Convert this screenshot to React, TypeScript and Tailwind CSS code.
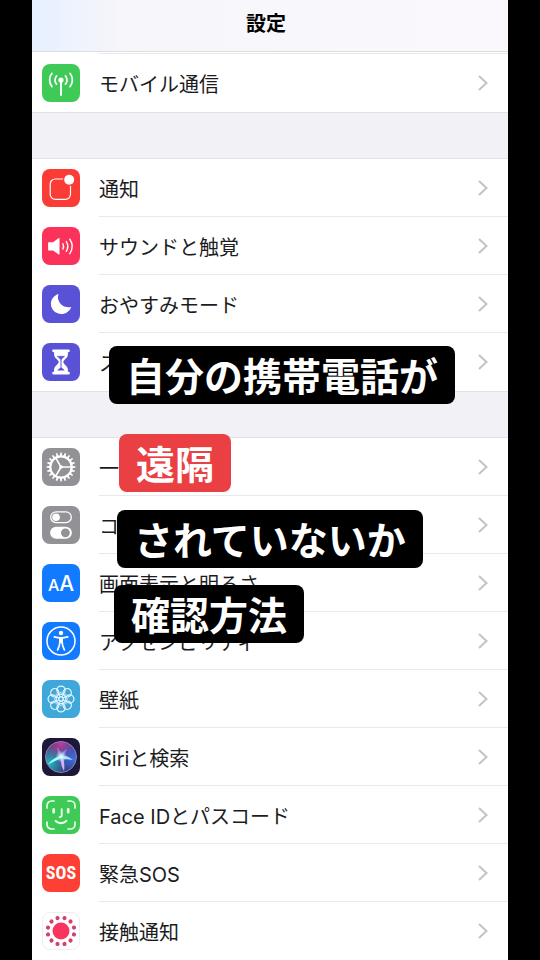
import React from 'react';

interface SettingItem {
  name: string;
  tile: string;
  icon: React.ReactNode;
}

interface IconProps {
  children: React.ReactNode;
}

const Icon: React.FC<IconProps> = ({ children }) => (
  <svg viewBox="0 0 38 38" className="w-full h-full" fill="none" stroke="white" strokeLinecap="round" strokeLinejoin="round" aria-hidden="true">
    {children}
  </svg>
);

const range = (count: number) => Array.from({ length: count }, (_, i) => i);

const AntennaIcon = () => (
  <Icon>
    <circle cx="19" cy="16" r="2.6" fill="white" stroke="none" />
    <path d="M19 16V31" strokeWidth="1.9" />
    <path d="M14.6 11.8a6.2 6.2 0 0 0 0 8.4M23.4 11.8a6.2 6.2 0 0 1 0 8.4" strokeWidth="1.7" />
    <path d="M10 9.3a10.6 10.6 0 0 0 0 13.4M28 9.3a10.6 10.6 0 0 1 0 13.4" strokeWidth="1.7" />
  </Icon>
);

const NotificationIcon = () => (
  <Icon>
    <rect x="8.2" y="10" width="20.3" height="20.3" rx="5" strokeWidth="1.2" />
    <circle cx="27.2" cy="10.8" r="6.3" fill="#fb3b36" stroke="none" />
    <circle cx="27.2" cy="10.8" r="5" fill="white" stroke="none" />
  </Icon>
);

const SoundIcon = () => (
  <Icon>
    <path d="M6.7 15.3h4.4l5.6-4.3a.5.5 0 0 1 .8.4v15.7a.5.5 0 0 1-.8.4l-5.6-4H6.7a.6.6 0 0 1-.6-.6v-7a.6.6 0 0 1 .6-.6z" fill="white" stroke="none" />
    <path d="M20.9 16.7a6 6 0 0 1 0 5.4" strokeWidth="1.4" />
    <path d="M24.3 14.5a9.500 9.500 0 0 1 0 9.800" strokeWidth="1.4" />
    <path d="M27.8 12.2a13 13 0 0 1 0 14.5" strokeWidth="1.4" />
  </Icon>
);

const MoonIcon = () => (
  <Icon>
    <path d="M16.6 8.9c-.8 2.100-.9 4.400 0 6.700 1.900 5 7.300 7.700 12.700 6.300-1.600 4.300-5.500 7-10 7-5.900 0-10.400-4.500-10.400-10.100 0-4.600 3.100-8.600 7.700-9.900z" fill="white" stroke="none" />
  </Icon>
);

const HourglassIcon = () => (
  <Icon>
    <path d="M11.5 6.5h15a1.200 1.200 0 0 1 0 2.700h-.6v2.200c0 3.600-4.600 5.400-4.600 7.600s4.600 4 4.600 7.600v2.200h.6a1.200 1.200 0 0 1 0 2.700h-15a1.200 1.200 0 0 1 0-2.700h.6v-2.200c0-3.600 4.600-5.400 4.600-7.600s-4.600-4-4.600-7.600V9.200h-.6a1.200 1.200 0 0 1 0-2.700z" fill="white" stroke="none" />
    <path d="M15.500 13.300h7L19 16.600z" fill="#5a52d6" stroke="#5a52d6" strokeWidth=".6" />
    <path d="M19 15v10" stroke="#5a52d6" strokeWidth="1" />
    <path d="M15.300 27.600c.6-1.500 2.300-2.300 3.700-3.200 1.400.9 3.100 1.700 3.700 3.200z" fill="#5a52d6" stroke="none" />
  </Icon>
);

const GearIcon = () => (
  <Icon>
    {range(20).map((i) => (
      <path key={i} d="M17.900 8L18.300 4.600H19.700L20.100 8z" fill="white" stroke="none" transform={`rotate(${i * 18} 19 19)`} />
    ))}
    <circle cx="19" cy="19" r="10.700" strokeWidth="2.200" />
    <circle cx="19" cy="19" r="1.800" fill="white" stroke="none" />
    {range(3).map((i) => (
      <path key={i} d="M19 19H29" strokeWidth="1.600" transform={`rotate(${i * 120} 19 19)`} />
    ))}
  </Icon>
);

const ControlIcon = () => (
  <Icon>
    <rect x="8.700" y="5.800" width="20.600" height="10.800" rx="5.400" strokeWidth="1.300" />
    <circle cx="14.100" cy="11.200" r="3.800" fill="white" stroke="none" />
    <rect x="8.100" y="20.800" width="21.800" height="12" rx="6" fill="white" stroke="none" />
    <circle cx="23.400" cy="26.800" r="4.400" fill="#919196" stroke="none" />
  </Icon>
);

const AccessibilityIcon = () => (
  <Icon>
    <circle cx="19" cy="19" r="14" strokeWidth="1.500" />
    <circle cx="19" cy="11" r="2.200" fill="white" stroke="none" />
    <path d="M12.300 14.900c2.300.6 4.500.9 6.700.9s4.400-.3 6.700-.9" strokeWidth="1.700" />
    <path d="M17 15.500h4v5.800h-4z" fill="white" stroke="none" />
    <path d="M17.800 20.500c0 2.800-1 5-2.200 7.400M20.200 20.500c0 2.800 1 5 2.200 7.400" strokeWidth="1.700" />
  </Icon>
);

const WallpaperIcon = () => (
  <Icon>
    {range(8).map((i) => (
      <g key={i} transform={`rotate(${i * 45} 19 19)`}>
        <circle cx="19" cy="10.200" r="4.100" stroke="#e4f7fd" strokeWidth="1.300" />
        <path d="M19 17c-2.200-1.600-2.200-3.400 0-5 2.200 1.600 2.200 3.400 0 5z" stroke="#e4f7fd" strokeWidth=".7" />
      </g>
    ))}
    <circle cx="19" cy="19" r="2.200" stroke="#e4f7fd" strokeWidth="1.100" />
  </Icon>
);

const SiriIcon = () => (
  <Icon>
    <defs>
      <radialGradient id="siriPink" cx=".5" cy=".08" r=".6">
        <stop offset="0" stopColor="#c03a98" />
        <stop offset="1" stopColor="#c03a98" stopOpacity="0" />
      </radialGradient>
      <radialGradient id="siriTeal" cx=".12" cy=".7" r=".6">
        <stop offset="0" stopColor="#22b9c4" />
        <stop offset="1" stopColor="#22b9c4" stopOpacity="0" />
      </radialGradient>
      <radialGradient id="siriBlue" cx=".9" cy=".55" r=".6">
        <stop offset="0" stopColor="#3a70de" />
        <stop offset="1" stopColor="#3a70de" stopOpacity="0" />
      </radialGradient>
      <radialGradient id="siriGlow">
        <stop offset="0" stopColor="#ffffff" />
        <stop offset=".4" stopColor="#bdf6ff" stopOpacity=".7" />
        <stop offset="1" stopColor="#9edcff" stopOpacity="0" />
      </radialGradient>
    </defs>
    <circle cx="19" cy="19" r="15.500" fill="#3b2b6d" stroke="none" />
    <circle cx="19" cy="19" r="15.500" fill="url(#siriPink)" stroke="none" />
    <circle cx="19" cy="19" r="15.500" fill="url(#siriTeal)" stroke="none" />
    <circle cx="19" cy="19" r="15.500" fill="url(#siriBlue)" stroke="none" />
    <path d="M19 17.500C14 19 9 22 6 26.500c5-2.500 9.500-4.500 14-6.500z" fill="#a5f8fb" stroke="none" />
    <path d="M18.500 18c0 6 1 10.500 3.500 15 .8-5 0-10-1-15z" fill="#d9b0f5" stroke="none" />
    <path d="M18 18c4-1 9 0 13 4-5-.8-9-1-13-1z" fill="#a9dcff" stroke="none" />
    <path d="M17.500 20c-1.500-5-2.500-8-2-11 2 3 3.500 6 4.500 9.500z" fill="#ff9fd3" fillOpacity=".45" stroke="none" />
    <path d="M18 19c1.500-4 4-6.500 7-8-1.200 3.500-3 6-5 9z" fill="#dfc5ff" fillOpacity=".4" stroke="none" />
    <circle cx="19.200" cy="18.500" r="6" fill="url(#siriGlow)" stroke="none" />
    <circle cx="19" cy="19" r="15.500" stroke="#8f8bb8" strokeWidth=".9" />
  </Icon>
);

const FaceIdIcon = () => (
  <Icon>
    <g stroke="#e9ffe9">
      <path d="M5 12V9.500A4.500 4.500 0 0 1 9.500 5H12M26 5h2.500A4.500 4.500 0 0 1 33 9.500V12M33 26v2.500a4.500 4.500 0 0 1-4.500 4.500H26M12 33H9.500A4.500 4.500 0 0 1 5 28.500V26" strokeWidth="1.700" />
      <path d="M11.700 13.400v2.800M26.200 13.400v2.800" strokeWidth="2.700" />
      <path d="M19.700 13.300v6.300c0 1-.6 1.500-2 1.500" strokeWidth="1.900" />
      <path d="M13.700 25c3 2.900 7.600 2.900 10.600 0" strokeWidth="2.200" />
    </g>
  </Icon>
);

const ContactIcon = () => (
  <Icon>
    <circle cx="19" cy="19" r="9" fill="#f8345f" stroke="none" />
    {range(12).map((i) => (
      <circle key={i} cx="19" cy="4.800" r="2.200" fill="#d33f70" stroke="none" transform={`rotate(${i * 30 + 15} 19 19)`} />
    ))}
  </Icon>
);

const groups: SettingItem[][] = [
  [{ name: 'モバイル通信', tile: 'bg-[#3fca58]', icon: <AntennaIcon /> }],
  [
    { name: '通知', tile: 'bg-[#fb3b36]', icon: <NotificationIcon /> },
    { name: 'サウンドと触覚', tile: 'bg-[#fb3259]', icon: <SoundIcon /> },
    { name: 'おやすみモード', tile: 'bg-[#5a52d6]', icon: <MoonIcon /> },
    { name: 'スクリーンタイム', tile: 'bg-[#5a52d6]', icon: <HourglassIcon /> },
  ],
  [
    { name: '一般', tile: 'bg-[#919196]', icon: <GearIcon /> },
    { name: 'コントロールセンター', tile: 'bg-[#919196]', icon: <ControlIcon /> },
    {
      name: '画面表示と明るさ',
      tile: 'bg-[#117aff]',
      icon: (
        <span className="flex items-baseline leading-none font-medium text-white">
          <span className="text-base leading-none">A</span>
          <span className="text-[21px] leading-none">A</span>
        </span>
      ),
    },
    { name: 'アクセシビリティ', tile: 'bg-[#117aff]', icon: <AccessibilityIcon /> },
    { name: '壁紙', tile: 'bg-[#3fa7d9]', icon: <WallpaperIcon /> },
    { name: 'Siriと検索', tile: 'bg-[#1d1838]', icon: <SiriIcon /> },
    { name: 'Face IDとパスコード', tile: 'bg-[#3fca58]', icon: <FaceIdIcon /> },
    {
      name: '緊急SOS',
      tile: 'bg-[#fe3f35]',
      icon: <span className="font-['Liberation_Sans_Narrow','Roboto_Condensed','Roboto',sans-serif] text-lg font-bold leading-none text-white">SOS</span>,
    },
    { name: '接触通知', tile: 'bg-white border border-[#f0eef0]', icon: <ContactIcon /> },
  ],
];

const captions = [
  { text: '自分の携帯電話が', style: 'bg-black' },
  { text: '遠隔', style: 'bg-[#ea4043] mt-[30px] ml-[10px]' },
  { text: 'されていないか', style: 'bg-black mt-[18px] ml-2' },
  { text: '確認方法', style: 'bg-black mt-[17px] ml-[5px]' },
];

const SettingRow: React.FC<{ item: SettingItem; isLast: boolean }> = ({ item, isLast }) => (
  <li>
    <a href="#" className="flex items-center h-[58px] pl-[10px]">
      <span className={`flex items-center justify-center w-[38px] h-[38px] shrink-0 rounded-lg overflow-hidden ${item.tile}`}>
        {item.icon}
      </span>
      <span className={`flex flex-1 items-center justify-between h-full ml-[19px] pr-5 ${isLast ? '' : 'border-b border-[#e9e9eb]'}`}>
        <span className="pt-1 text-xl">{item.name}</span>
        <svg viewBox="0 0 10 16" className="w-[10px] h-4 shrink-0" fill="none" stroke="#c3c3c6" strokeWidth="2" aria-hidden="true">
          <path d="M1 1l7.500 7L1 15" />
        </svg>
      </span>
    </a>
  </li>
);

const App: React.FC = () => {
  return (
    <div lang="ja" className="relative min-h-screen bg-black px-8 font-['Inter','Noto_Sans_CJK_JP',sans-serif] text-[#1c1c1e]">
      <div className="min-h-screen bg-white">
        <header className="flex items-center justify-center h-[52px] pr-2 pb-1 border-b border-[#dededf] bg-linear-to-r from-[#e6f0ff] via-[#f7f6fa] via-20% to-[#faf8fc]">
          <h1 className="text-xl font-bold text-black">設定</h1>
        </header>

        {/* Bottom edge of the row scrolled under the header */}
        <div className="h-[2px] ml-[67px] border-b border-[#e9e9eb]"></div>

        <main>
          {groups.map((items, index) => (
            <section key={index}>
              {index > 0 && <div className="h-[47px] bg-[#f1f1f6] border-y border-[#e2e2e6]"></div>}
              <ul>
                {items.map((item, i) => (
                  <SettingRow key={item.name} item={item} isLast={i === items.length - 1} />
                ))}
              </ul>
            </section>
          ))}
        </main>
      </div>

      {/* Caption overlay */}
      <div className="absolute top-[346px] left-[109px] flex flex-col items-start">
        {captions.map((caption) => (
          <p key={caption.text} className={`px-[17px] pt-1 rounded-lg text-[39px] leading-[54px] font-bold whitespace-nowrap text-white ${caption.style}`}>
            {caption.text}
          </p>
        ))}
      </div>
    </div>
  );
};

export default App;
